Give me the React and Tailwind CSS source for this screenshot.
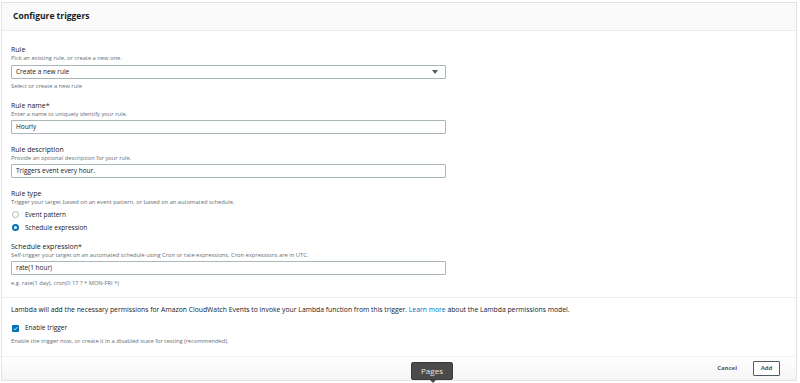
import React from 'react'

const font = { fontFamily: '"Open Sans", "Liberation Sans", sans-serif' }

function Label({ children }) {
  return <div className="text-[7px] leading-[9px] text-[#16191f]">{children}</div>
}

function Hint({ children }) {
  return <div className="text-[5.75px] leading-[8px] text-[#687078]">{children}</div>
}

function Input({ value }) {
  return (
    <div className="mt-[2px] h-[14px] w-[435px] border border-[#aab7b8] rounded-[1px] px-[4px] flex items-center text-[6.5px] text-[#16191f]">
      {value}
    </div>
  )
}

export default function App() {
  return (
    <div className="w-[800px] h-[383px] bg-white overflow-hidden relative" style={font}>
      <div className="ml-[1px] mr-[3px] mt-[2px] h-[379px] border border-[#e1e4e5] flex flex-col">
        {/* header */}
        <div className="h-[28px] bg-[#fafafa] border-b border-[#eaeded] flex items-center pl-[11px]">
          <h1 className="text-[8.5px] font-bold text-[#16191f]">Configure triggers</h1>
        </div>

        {/* form */}
        <div className="pl-[9px] pt-[14px]">
          <Label>Rule</Label>
          <Hint>Pick an existing rule, or create a new one.</Hint>
          <div className="mt-[3px] h-[14px] w-[435px] border border-[#aab7b8] rounded-[1px] px-[4px] flex items-center justify-between text-[6.5px] text-[#16191f]">
            <span>Create a new rule</span>
            <svg width="6" height="4" viewBox="0 0 6 4" className="mr-[3px]">
              <path d="M0 0 H6 L3 4 Z" fill="#545b64" />
            </svg>
          </div>
          <div className="mt-[3px]"><Hint>Select or create a new rule</Hint></div>

          <div className="mt-[11px]">
            <Label>Rule name*</Label>
            <Hint>Enter a name to uniquely identify your rule.</Hint>
            <Input value="Hourly" />
          </div>

          <div className="mt-[11px]">
            <Label>Rule description</Label>
            <Hint>Provide an optional description for your rule.</Hint>
            <Input value="Triggers event every hour." />
          </div>

          <div className="mt-[11px]">
            <Label>Rule type</Label>
            <Hint>Trigger your target based on an event pattern, or based on an automated schedule.</Hint>
            <div className="mt-[2px] flex items-center h-[13px] gap-[6px] pl-[1px] text-[6.5px] text-[#16191f]">
              <span className="w-[7px] h-[7px] rounded-full border border-[#aab7b8] bg-white" />
              Event pattern
            </div>
            <div className="flex items-center h-[13px] gap-[6px] pl-[1px] text-[6.5px] text-[#16191f]">
              <span className="w-[7px] h-[7px] rounded-full border-[2px] border-[#0073bb] bg-white" />
              Schedule expression
            </div>
          </div>

          <div className="mt-[8px]">
            <Label>Schedule expression*</Label>
            <Hint>Self-trigger your target on an automated schedule using Cron or rate expressions. Cron expressions are in UTC.</Hint>
            <Input value="rate(1 hour)" />
            <div className="mt-[4px]"><Hint>e.g. rate(1 day), cron(0 17 ? * MON-FRI *)</Hint></div>
          </div>
        </div>

        <div className="mt-[10px] border-t border-[#eaeded]" />

        <div className="pl-[9px] pt-[8px]">
          <div className="text-[6.8px] leading-[8px] text-[#16191f]">
            Lambda will add the necessary permissions for Amazon CloudWatch Events to invoke your Lambda function from this trigger.{' '}
            <span className="text-[#0073bb]">Learn more</span> about the Lambda permissions model.
          </div>
          <div className="mt-[9px] flex items-center h-[10px] gap-[6px] pl-[1px] text-[6.5px] text-[#16191f]">
            <span className="w-[7px] h-[7px] rounded-[1px] bg-[#0073bb] flex items-center justify-center">
              <svg width="5" height="5" viewBox="0 0 10 10">
                <path d="M1.5 5.2 L4 7.6 L8.6 2.4" stroke="#fff" strokeWidth="1.8" fill="none" />
              </svg>
            </span>
            Enable trigger
          </div>
          <div className="mt-[4px]"><Hint>Enable the trigger now, or create it in a disabled state for testing (recommended).</Hint></div>
        </div>

        <div className="mt-[11px] border-t border-[#f2f3f3]" />

        <div className="flex-1 flex items-center justify-end gap-[16px] pr-[16px] bg-gradient-to-b from-white to-[#f5f5f5]">
          <span className="text-[6px] font-bold text-[#545b64]">Cancel</span>
          <span className="h-[15px] w-[27px] border border-[#545b64] rounded-[1px] bg-white flex items-center justify-center text-[6px] font-bold text-[#545b64]">
            Add
          </span>
        </div>
      </div>

      {/* tooltip overlay */}
      <div className="absolute left-[411px] top-[362px] w-[42px] h-[18px] bg-[#4b4b4b] rounded-[2px] border border-[#3a3a3a] flex items-center justify-center text-[8px] text-[#e8e8e8]">
        Pages
        <span className="absolute left-[18px] bottom-[-4px] w-0 h-0 border-l-[3px] border-r-[3px] border-t-[3px] border-l-transparent border-r-transparent border-t-[#4b4b4b]" />
      </div>
    </div>
  )
}
